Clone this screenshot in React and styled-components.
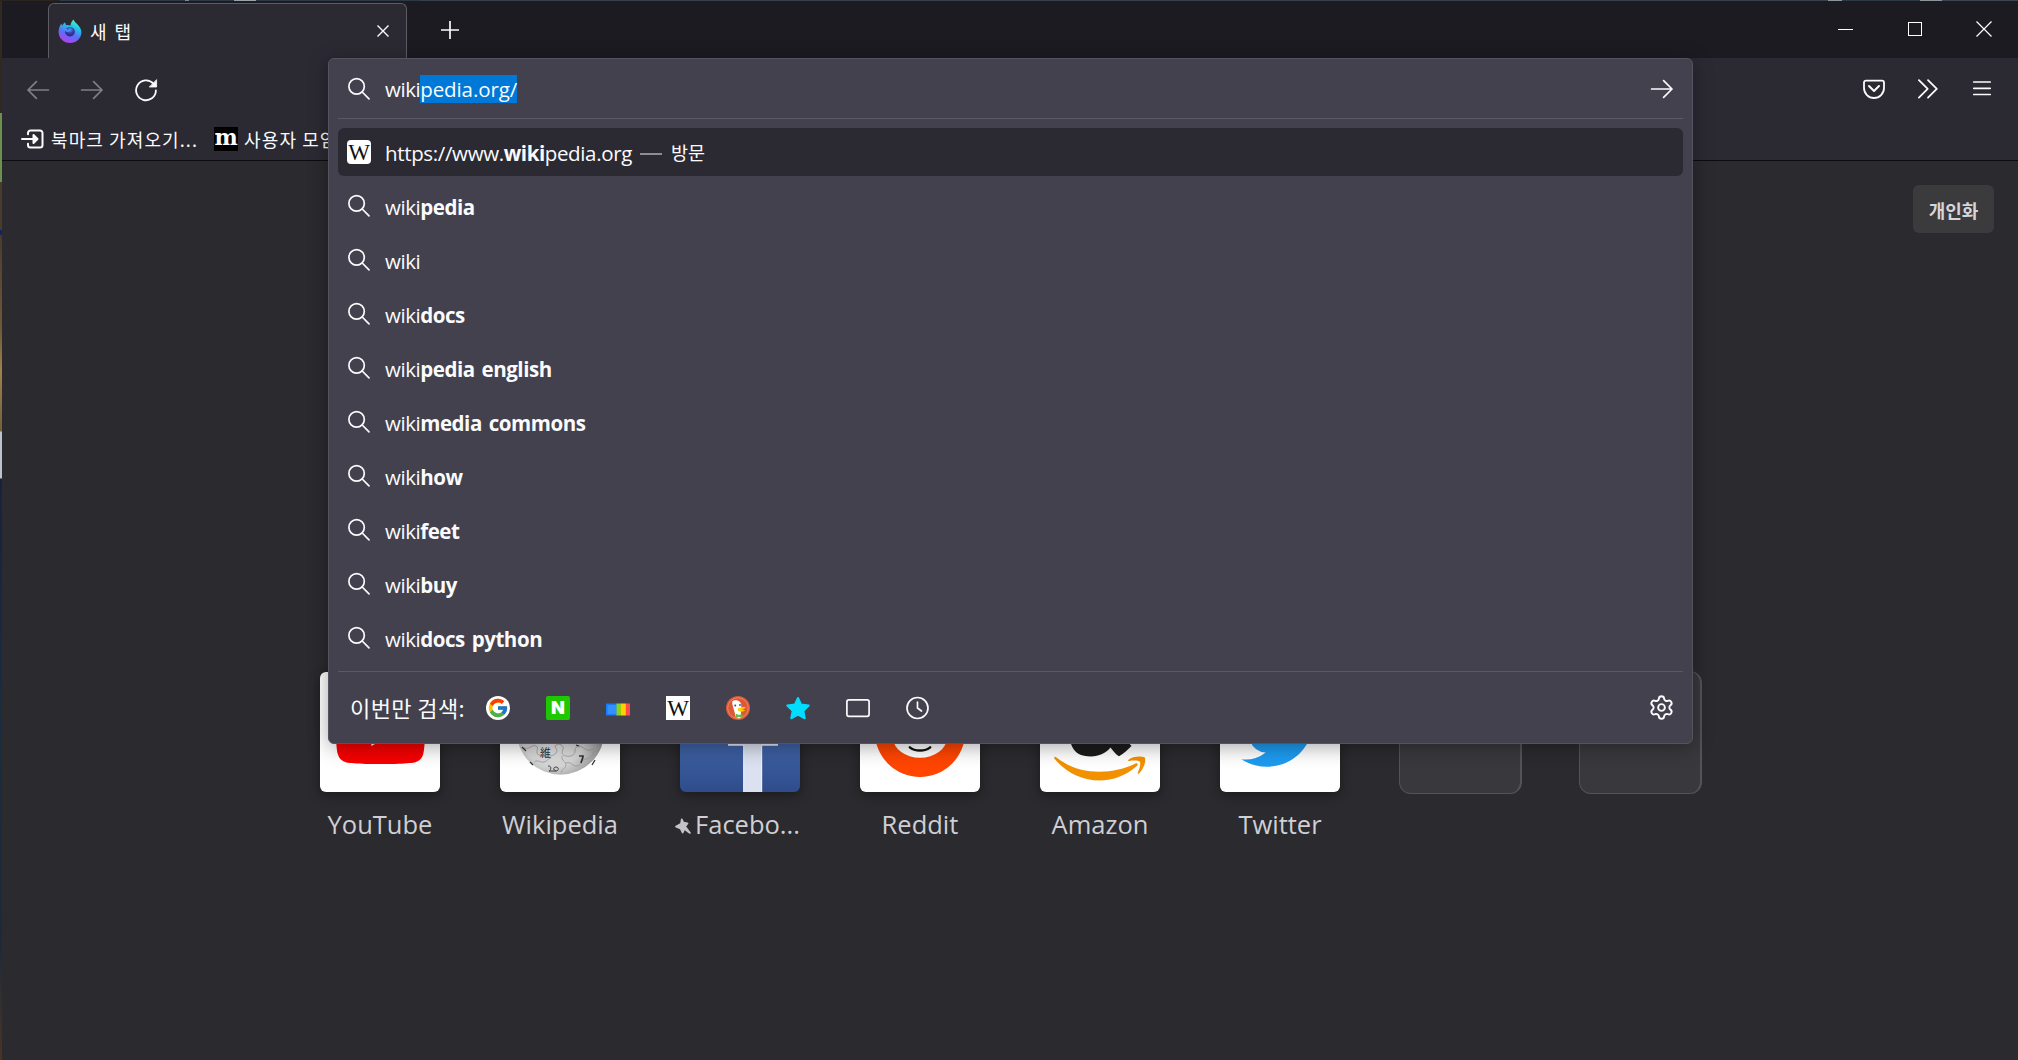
import styled, { createGlobalStyle } from 'styled-components';
import { Settings } from 'lucide-react';
import { FcGoogle } from 'react-icons/fc';

const latin = "'Open Sans', 'Noto Sans CJK KR', sans-serif";
const korean = "'Noto Sans CJK KR', 'Open Sans', sans-serif";

const GlobalStyle = createGlobalStyle`
	* {
		box-sizing: border-box;
	}
	body {
		margin: 0;
		background-color: #2b2a2e;
		font-family: ${latin};
		overflow: hidden;
	}
	svg {
		display: block;
		flex-shrink: 0;
	}
`;

//Desktop peeking out around the window
const Desktop = styled.div`
	display: flex;
	width: 2018px;
	height: 1060px;
	padding: 1px 0 0 2px;
	background:
		linear-gradient(
			90deg,
			#2a241e 0 60px,
			#2b3947 60px 185px,
			#7d8a94 185px 189px,
			#2b3947 189px 234px,
			#9aa2a8 234px 256px,
			#2b3947 256px 420px,
			#36414d 420px 1828px,
			#8b959c 1828px 1842px,
			#2d3945 1842px 1920px,
			#8b959c 1920px 1942px,
			#3a454f 1942px
		) 0 0 / 100% 1px no-repeat,
		linear-gradient(
			180deg,
			#32281f 0 113px,
			#6c914f 113px 182px,
			#4a3b2c 182px 230px,
			#10206a 230px 234px,
			#4a3b2c 236px,
			#6f5a3a 330px,
			#9c824c 370px,
			#75603c 431px,
			#b9c4cc 432px 478px,
			#16233a 479px,
			#1c2c40 700px,
			#1b2a3a 940px,
			#4a3424 1060px
		);
`;

const Window = styled.div`
	position: relative;
	display: flex;
	flex-direction: column;
	flex: 1;
	background-color: #2b2a2e;
`;

const TitleBar = styled.div`
	display: flex;
	height: 57px;
	padding-left: 46px;
	background-color: #1c1b22;
`;

const Tab = styled.div`
	display: flex;
	align-items: center;
	width: 359px;
	height: 55px;
	margin-top: 2px;
	padding: 0 16px 0 9px;
	background-color: #2b2a33;
	border: 1px solid #5d5c65;
	border-bottom: none;
	border-radius: 6px 6px 0 0;
	color: #fbfbfe;
`;

const TabTitle = styled.span`
	flex: 1;
	margin-left: 8px;
	font-family: ${korean};
	font-size: 18px;
	line-height: 26px;
	word-spacing: 4px;
`;

const NewTab = styled.div`
	display: flex;
	align-items: center;
	padding: 0 0 0 33px;
	height: 58px;
`;

const WindowButtons = styled.div`
	display: flex;
	margin-left: auto;
`;

const WindowButton = styled.div`
	display: flex;
	justify-content: center;
	align-items: center;
	width: 69px;
	height: 56px;
`;

const NavBar = styled.div`
	display: flex;
	justify-content: space-between;
	height: 63px;
	padding: 0 9px;
	background-color: #2b2a33;
`;

const NavGroup = styled.div`
	display: flex;
	align-items: center;
`;

const NavButton = styled.div`
	display: flex;
	justify-content: center;
	align-items: center;
	width: 54px;
	height: 54px;
	color: ${({ $disabled }) => ($disabled ? '#807f87' : '#fbfbfe')};
`;

const Bookmarks = styled.div`
	display: flex;
	height: 40px;
	padding: 0 0 3px 19px;
	background-color: #2b2a33;
	border-bottom: 1px solid #0c0c0d;
`;

const Bookmark = styled.div`
	display: flex;
	align-items: center;
	gap: 6px;
	margin-right: 16px;
	color: #fbfbfe;
	font-family: ${korean};
	font-size: 18px;
	line-height: 26px;
	letter-spacing: 1.1px;
	white-space: nowrap;
`;

const Page = styled.div`
	display: flex;
	flex-direction: column;
	flex: 1;
	padding: 24px 24px 0 0;
`;

const Personalize = styled.div`
	align-self: flex-end;
	width: 81px;
	height: 48px;
	border-radius: 6px;
	background-color: #3b3b3d;
	color: #d6d5da;
	font-family: ${korean};
	font-size: 18px;
	font-weight: 700;
	line-height: 50px;
	text-align: center;
`;

const TopSites = styled.div`
	display: flex;
	gap: 60px;
	margin: 439px 0 0 318px;
`;

const Site = styled.div`
	display: flex;
	flex-direction: column;
	align-items: center;
	width: 120px;
`;

const Tile = styled.div`
	width: 120px;
	height: 120px;
	border-radius: 6px;
	background: ${({ $bg }) => $bg || '#fff'};
	box-shadow: 0 3px 12px rgba(0, 0, 0, 0.4);
	overflow: hidden;
`;

const EmptyTile = styled.div`
	width: 123px;
	height: 123px;
	margin: -1px -2px 0 -1px;
	flex-shrink: 0;
	border: 1px solid #545358;
	border-right-width: 2px;
	border-radius: 12px;
	background-color: #39383c;
`;

const SiteName = styled.div`
	display: flex;
	align-items: center;
	margin: 14px 0 0 ${({ $pinned }) => ($pinned ? '-5px' : '0')};
	gap: 4px;
	color: #cfcfd4;
	font-size: 25.5px;
	line-height: 36px;
	white-space: nowrap;
	svg {
		margin-top: 3px;
	}
`;

//Address bar with its open suggestion list
const UrlPanel = styled.div`
	position: absolute;
	top: 57px;
	left: 326px;
	width: 1365px;
	height: 686px;
	padding: 0 9px;
	border: 1px solid #54535f;
	border-radius: 6px;
	background-color: #42414d;
	box-shadow: 0 3px 20px rgba(0, 0, 0, 0.35);
	color: #fbfbfe;
	font-size: 20.5px;
	letter-spacing: -0.1px;
`;

const UrlInput = styled.div`
	display: flex;
	align-items: center;
	height: 60px;
	padding: 0 9px;
	border-bottom: 1px solid #5a5964;
`;

const UrlText = styled.div`
	flex: 1;
	margin-left: 14px;
	line-height: 28px;
`;

const Typed = styled.span`
	letter-spacing: -0.45px;
`;

const Selection = styled.span`
	display: inline-block;
	height: 28px;
	background-color: #0078d7;
`;

const Results = styled.div`
	display: flex;
	flex-direction: column;
	gap: 6px;
	padding: 9px 0;
	border-bottom: 1px solid #5a5964;
`;

const Result = styled.div`
	display: flex;
	align-items: center;
	height: 48px;
	padding: 0 9px;
	border-radius: 6px;
	background-color: ${({ $selected }) => ($selected ? '#2b2a33' : 'transparent')};
`;

const ResultText = styled.span`
	margin: 2px 0 0 14px;
	line-height: 28px;
	letter-spacing: -0.35px;
	white-space: nowrap;
	b {
		font-weight: 700;
		letter-spacing: -0.45px;
		word-spacing: 2px;
	}
`;

const Dash = styled.span`
	width: 22px;
	height: 1.5px;
	margin: 4px 9px 0 8px;
	background-color: #8d8c95;
`;

const Action = styled.span`
	font-family: ${korean};
	font-size: 18.5px;
	line-height: 28px;
	letter-spacing: 0;
`;

const OneOffs = styled.div`
	display: flex;
	align-items: center;
	height: 71px;
	padding: 0 8px 0 12px;
`;

const OneOffLabel = styled.span`
	width: 136px;
	margin-top: -1px;
	font-family: ${korean};
	font-size: 22px;
	line-height: 30px;
	letter-spacing: 0.4px;
	white-space: nowrap;
`;

const Engines = styled.div`
	display: flex;
	flex: 1;
	gap: 36px;
`;

const GoogleBadge = styled.div`
	display: flex;
	justify-content: center;
	align-items: center;
	width: 24px;
	height: 24px;
	border-radius: 50%;
	background-color: #fff;
`;

const LetterBadge = styled.div`
	width: 24px;
	height: 24px;
	border-radius: ${({ $radius }) => $radius || 0}px;
	background-color: ${({ $bg }) => $bg};
	color: ${({ $color }) => $color};
	font-family: ${({ $font }) => $font};
	font-size: ${({ $size }) => $size}px;
	font-weight: ${({ $weight }) => $weight || 400};
	line-height: ${({ $line }) => $line || 24}px;
	letter-spacing: 0;
	display: flex;
	justify-content: center;
	flex-shrink: 0;
`;

const WikiBadge = ({ radius }) => (
	<LetterBadge $bg="#fff" $color="#111" $radius={radius} $font="'Liberation Serif', serif" $size={23} $line={25}>
		W
	</LetterBadge>
);

const SearchIcon = () => (
	<svg width="24" height="24" viewBox="0 0 24 24" fill="none" stroke="#fbfbfe" strokeWidth="1.7" strokeLinecap="round">
		<circle cx="9.6" cy="9.4" r="7.7" />
		<path d="M15.2 15L22 21.8" />
	</svg>
);

const ArrowIcon = ({ flip }) => (
	<svg width="24" height="24" viewBox="0 0 24 24" fill="none" stroke="currentColor" strokeWidth="1.7" strokeLinecap="round" strokeLinejoin="round">
		<path d={flip ? 'M22.4 12H2M10.4 3.6L2 12l8.4 8.4' : 'M1.6 12H22M13.6 3.6L22 12l-8.4 8.4'} />
	</svg>
);

const ReloadIcon = () => (
	<svg width="24" height="24" viewBox="0 0 24 24" fill="none" stroke="currentColor" strokeWidth="1.8" strokeLinecap="round">
		<path d="M21.9 12.4A9.9 9.9 0 1 1 19.4 5.700" />
		<path d="M22.6 2v7h-7z" fill="currentColor" strokeWidth=".8" strokeLinejoin="round" />
	</svg>
);

const FirefoxIcon = () => (
	<svg width="24" height="24" viewBox="0 0 24 24">
		<defs>
			<linearGradient id="fx" x1=".75" y1="0" x2=".35" y2="1">
				<stop offset="0" stopColor="#5dfca8" />
				<stop offset=".32" stopColor="#1fc5ee" />
				<stop offset=".62" stopColor="#5a72f5" />
				<stop offset="1" stopColor="#b33df5" />
			</linearGradient>
			<radialGradient id="fxCore" cx=".5" cy=".3" r=".7">
				<stop offset="0" stopColor="#3fa7e6" />
				<stop offset=".5" stopColor="#3a3fae" />
				<stop offset="1" stopColor="#321c7e" />
			</radialGradient>
		</defs>
		<path d="M15.6.4c.4 2 2 3 3.5 4.5 2.9 2.9 4.3 5.5 4.3 8.3C23.4 19.3 18.3 24 12 24S.6 19.1.6 13c0-3.300 1.200-6.300 2.800-8.400.1 1 .4 1.600.8 2.200C4.800 5.200 5.800 4 7.200 3.200c0 1.300.5 2.300 1.300 3 1.500-.2 2.900 0 3.900.5.3-2.500 1.400-4.700 3.200-6.300z" fill="url(#fx)" />
		<path d="M8.2 9.6c2.500-2.800 8-1.900 8.600 2.200.5 3.500-2.300 5.700-5 5.600-3.200-.1-5.100-2.700-4.700-5.300.9 1 2.300 1.300 3.800.6.8-.4 1.600-1 2.200-1.700-2 .5-3.600 0-4.900-1.400z" fill="url(#fxCore)" />
	</svg>
);

const ImportIcon = () => (
	<svg width="24" height="24" viewBox="0 0 24 24" fill="none" stroke="currentColor" strokeWidth="2" strokeLinecap="round" strokeLinejoin="round">
		<path d="M7 7.200V6a2.500 2.500 0 0 1 2.500-2.500h9.500A2.500 2.500 0 0 1 21.500 6v12a2.500 2.500 0 0 1-2.500 2.500H9.500A2.500 2.500 0 0 1 7 18v-1.200M1 12h12" />
		<path d="M12.500 8l4 4-4 4z" fill="currentColor" />
	</svg>
);

const PocketIcon = () => (
	<svg width="24" height="24" viewBox="0 0 24 24" fill="none" stroke="currentColor" strokeWidth="1.8" strokeLinecap="round" strokeLinejoin="round">
		<path d="M4 2.600h16a2 2 0 0 1 2 2V10a10 10 0 0 1-20 0V4.600a2 2 0 0 1 2-2z" />
		<path d="M7 8l5 5 5-5" strokeWidth="2" />
	</svg>
);

const DuckIcon = () => (
	<svg width="24" height="24" viewBox="0 0 24 24">
		<circle cx="12" cy="12" r="12" fill="#de5833" />
		<circle cx="12" cy="12" r="10.3" fill="none" stroke="#f0a48e" strokeWidth=".6" />
		<path d="M6.300 5.500C7.500 3.800 12 3.500 14 6c1.500 2 1.400 4 1.200 6.500L14.600 22c-2 .4-3.600.2-4.700-.4C9 17 7.200 12 6.700 9.500c-.3-1.600-.6-2.600-.4-4z" fill="#fff" />
		<circle cx="9.2" cy="9.5" r="1" fill="#2d4f8e" />
		<circle cx="14" cy="9" r=".9" fill="#2d4f8e" />
		<path d="M12.200 12.200c2-.9 5.500-1.500 7.300-1 .3 1-2.500 1.800-4 2.200 1.700.4 3.200.2 3.400.9-.8 1.500-5.200 1.800-6.500.6-.6-.7-.8-2-.2-2.700z" fill="#fdd20a" />
		<path d="M10 17.800l3 1.200 3.500-1.200v4L13 20.900l-3 1z" fill="#65bc46" />
	</svg>
);

const StarIcon = () => (
	<svg width="24" height="24" viewBox="0 0 24 24" fill="#00ddff" stroke="#00ddff" strokeWidth="2" strokeLinejoin="round">
		<path d="M12 2l3.100 6.600 7.600.9-5.400 5.200 1.400 7.600L12 18.600l-6.700 3.700 1.400-7.600L1.300 9.500l7.600-.9z" />
	</svg>
);

const ColorsIcon = () => (
	<svg width="24" height="24" viewBox="0 0 24 24">
		<rect y="7.5" width="11" height="12" fill="#167bfb" />
		<rect x="1.5" y="9" width="9" height="9" fill="#3390ff" />
		<rect x="10.5" y="7.5" width="4.7" height="12" fill="#8fd11a" />
		<rect x="15" y="7.5" width="5" height="12" fill="#ffd000" />
		<rect x="19.8" y="7.5" width="4.2" height="12" fill="#ff4b4b" />
	</svg>
);

const TabsIcon = () => (
	<svg width="24" height="24" viewBox="0 0 24 24" fill="none" stroke="#fbfbfe" strokeWidth="1.7">
		<rect x=".9" y="3.9" width="22.2" height="16.4" rx="2" />
	</svg>
);

const ClockIcon = () => (
	<svg width="24" height="24" viewBox="0 0 24 24" fill="none" stroke="#fbfbfe" strokeWidth="1.7" strokeLinecap="round" strokeLinejoin="round">
		<circle cx="11.5" cy="12" r="10.5" />
		<path d="M11.500 6v6l4 3" />
	</svg>
);

const PinIcon = () => (
	<svg width="16" height="16" viewBox="0 0 16 16" fill="#c3c3c8">
		<path d="M6 .8c.5-.6 1.300-.5 1.600.2l1.200 2.800 3.700.7c1 .3 1.200 1 .6 1.600l-1.900 2.500 4.500 5.900c.5.9-.4 1.700-1.300 1.200l-4.600-3.500-1.300 2.600c-.4.800-1.200.8-1.600.1L5 11.300.8 9.400C0 9-.1 8.200.7 7.800l4.500-2.600z" />
	</svg>
);

const YouTubeArt = () => (
	<svg width="120" height="120" viewBox="0 0 120 120">
		<path transform="translate(16 16.2) scale(3.71)" fill="#f60002" d="M23.498 6.186a3.016 3.016 0 0 0-2.122-2.136C19.505 3.545 12 3.545 12 3.545s-7.505 0-9.377.505A3.017 3.017 0 0 0 .502 6.186C0 8.070 0 12 0 12s0 3.930.502 5.814a3.016 3.016 0 0 0 2.122 2.136c1.871.505 9.376.505 9.376.505s7.505 0 9.377-.505a3.015 3.015 0 0 0 2.122-2.136C24 15.930 24 12 24 12s0-3.930-.502-5.814zM9.545 15.568V8.432L15.818 12l-6.273 3.568z" />
	</svg>
);

const WikipediaArt = () => (
	<svg width="120" height="120" viewBox="0 0 120 120">
		<defs>
			<radialGradient id="globe" cx=".42" cy=".55" r=".6">
				<stop offset="0" stopColor="#efefef" />
				<stop offset=".6" stopColor="#d4d4d4" />
				<stop offset="1" stopColor="#8b8b8b" />
			</radialGradient>
		</defs>
		<circle cx="60.5" cy="58.7" r="44" fill="url(#globe)" />
		<g fill="none" stroke="#9a9a9a" strokeWidth=".8">
			<path d="M24 76c6 2 8-4 12-2s-2 7 3 9 14 2 17-2-3-6 0-8 8 0 7 4-2 6 3 7 9-1 9-5 3-6 7-4 5 5 12 2" />
			<path d="M34 90c4-3 6 1 10 0s4-4 7-4M62 84c-1 5 4 5 4 9s-5 4-5 8M66 91c6-2 6 4 11 3s4-6 9-7 6-3 8-8" />
		</g>
		<g fill="none" stroke="#333" strokeWidth="1.3">
			<path d="M79 84h4c0 3-1.500 4-2 7" strokeWidth="1.7" />
			<path d="M48 94c5 0 2 5 1 5h7c3 0 3-4 0-4s-3 3 0 4" strokeWidth=".9" />
			<path d="M22 75l4 4M76 73l3 1M95 88l-3 5M30 90l3 3" />
		</g>
		<text x="40" y="84.5" fontSize="11" fill="#333" fontFamily="'Noto Sans CJK JP', sans-serif">維</text>
	</svg>
);

const FacebookArt = () => (
	<svg width="120" height="120" viewBox="0 0 120 120">
		<path d="M48 56h50v17.500H82V120H63.500V73.500H48z" fill="#dbe1f0" />
		<path d="M48 73h15.700V120M98 73H81.700V120" fill="none" stroke="#f3f5fa" strokeWidth="1" />
	</svg>
);

const RedditArt = () => (
	<svg width="120" height="120" viewBox="0 0 120 120">
		<circle cx="60" cy="59.8" r="45.2" fill="#ff4500" />
		<ellipse cx="60" cy="65.5" rx="27" ry="20.2" fill="#fff" />
		<path d="M49.800 75.300c5 4.200 15.400 4.200 20.400 0" fill="none" stroke="#111" strokeWidth="2.4" strokeLinecap="round" />
	</svg>
);

const AmazonArt = () => (
	<svg width="120" height="120" viewBox="0 0 120 120">
		<path d="M31 56v16c3 9 10 12.500 20 12.500 8 0 15-3.500 19.500-9 2.500 3.500 5.500 7 8.500 8.800 4-2.500 9-6.500 12.500-10.300L88 70V56z" fill="#1b1b1b" />
		<path d="M15.500 84.800c14 11 28 14.900 44 14.900 13 0 25-2.800 36-8.200 1.800-.9 3 .9 1.600 2.200C86 103.500 73 108.500 59.500 108.500c-17 0-33-7.500-44.800-21.500-.9-1.300-.4-2.800.8-2.200z" fill="#f29100" />
		<path d="M88.500 87.700c4-3.200 12-4 16.300-2.200 1.500 3.500-1 11.500-5.800 16-.9.8-1.600.3-1.200-.7 1.200-3.200 3.200-8.700 2.200-10.800-1.400-2-7.400-1.500-10.700-1.100-1.300.2-1.600-.6-.8-1.200z" fill="#f29100" />
	</svg>
);

const TwitterArt = () => (
	<svg width="120" height="120" viewBox="0 0 120 120">
		<path transform="translate(21.3 21.6) scale(3.36)" fill="#1d9bf0" d="M23.953 4.570a10 10 0 01-2.825.775 4.958 4.958 0 002.163-2.723c-.951.555-2.005.959-3.127 1.184a4.920 4.920 0 00-8.384 4.482C7.690 8.095 4.067 6.130 1.640 3.162a4.822 4.822 0 00-.666 2.475c0 1.710.87 3.213 2.188 4.096a4.904 4.904 0 01-2.228-.616v.06a4.923 4.923 0 003.946 4.827 4.996 4.996 0 01-2.212.085 4.936 4.936 0 004.604 3.417 9.867 9.867 0 01-6.102 2.105c-.39 0-.779-.023-1.170-.067a13.995 13.995 0 007.557 2.209c9.053 0 13.998-7.496 13.998-13.985 0-.21 0-.42-.015-.63A9.935 9.935 0 0024 4.590z" />
	</svg>
);

const sites = [
	{ name: 'YouTube', Art: YouTubeArt },
	{ name: 'Wikipedia', Art: WikipediaArt },
	{ name: 'Facebo...', Art: FacebookArt, pinned: true, bg: 'linear-gradient(#4a70bd, #3f62a5 60%, #2f4c8a)' },
	{ name: 'Reddit', Art: RedditArt },
	{ name: 'Amazon', Art: AmazonArt },
	{ name: 'Twitter', Art: TwitterArt },
];

const suggestions = ['pedia', '', 'docs', 'pedia english', 'media commons', 'how', 'feet', 'buy', 'docs python'];

const App = () => {
	return (
		<Desktop>
			<GlobalStyle />
			<Window>
				<TitleBar>
					<Tab>
						<FirefoxIcon />
						<TabTitle>새 탭</TabTitle>
						<svg width="14" height="14" viewBox="0 0 14 14" fill="none" stroke="#fbfbfe" strokeWidth="1.4">
							<path d="M1.500 1.500l11 11M12.500 1.500l-11 11" />
						</svg>
					</Tab>
					<NewTab>
						<svg width="20" height="20" viewBox="0 0 20 20" stroke="#fbfbfe" strokeWidth="1.7">
							<path d="M10 1v18M1 10h18" />
						</svg>
					</NewTab>
					<WindowButtons>
						<WindowButton>
							<svg width="15" height="15" viewBox="0 0 15 15" stroke="#fff">
								<path d="M0 7.500h15" />
							</svg>
						</WindowButton>
						<WindowButton>
							<svg width="14" height="14" viewBox="0 0 14 14" fill="none" stroke="#fff">
								<rect x=".5" y=".5" width="13" height="13" />
							</svg>
						</WindowButton>
						<WindowButton>
							<svg width="16" height="16" viewBox="0 0 16 16" stroke="#fff" strokeWidth="1.2">
								<path d="M.5.5l15 15M15.500.5l-15 15" />
							</svg>
						</WindowButton>
					</WindowButtons>
				</TitleBar>
				<NavBar>
					<NavGroup>
						<NavButton $disabled>
							<ArrowIcon flip />
						</NavButton>
						<NavButton $disabled>
							<ArrowIcon />
						</NavButton>
						<NavButton>
							<ReloadIcon />
						</NavButton>
					</NavGroup>
					<NavGroup>
						<NavButton>
							<PocketIcon />
						</NavButton>
						<NavButton>
							<svg width="24" height="24" viewBox="0 0 24 24" fill="none" stroke="currentColor" strokeWidth="1.8" strokeLinecap="round" strokeLinejoin="round">
								<path d="M2.900 2.200l8.800 8.700-8.800 8.700M12 2.200l8.800 8.700-8.800 8.700" />
							</svg>
						</NavButton>
						<NavButton>
							<svg width="24" height="24" viewBox="0 0 24 24" stroke="currentColor" strokeWidth="1.7" strokeLinecap="round">
								<path d="M3.800 4h16.400M3.800 10.300h16.400M3.800 16.500h16.400" />
							</svg>
						</NavButton>
					</NavGroup>
				</NavBar>
				<Bookmarks>
					<Bookmark>
						<ImportIcon />
						북마크 가져오기...
					</Bookmark>
					<Bookmark>
						<LetterBadge $bg="#000" $color="#fff" $font="'DejaVu Serif', serif" $size={22} $weight={700} $line={20}>
							m
						</LetterBadge>
						사용자 모임
					</Bookmark>
				</Bookmarks>
				<Page>
					<Personalize>개인화</Personalize>
					<TopSites>
						{sites.map(({ name, Art, pinned, bg }) => (
							<Site key={name}>
								<Tile $bg={bg}>
									<Art />
								</Tile>
								<SiteName $pinned={pinned}>
									{pinned && <PinIcon />}
									{name}
								</SiteName>
							</Site>
						))}
						<EmptyTile />
						<EmptyTile />
					</TopSites>
				</Page>
				<UrlPanel>
					<UrlInput>
						<SearchIcon />
						<UrlText>
							<Typed>wiki</Typed>
							<Selection>pedia.org/</Selection>
						</UrlText>
						<ArrowIcon />
					</UrlInput>
					<Results>
						<Result $selected>
							<WikiBadge radius={4} />
							<ResultText>
								https://www.<b>wiki</b>pedia.org
							</ResultText>
							<Dash />
							<Action>방문</Action>
						</Result>
						{suggestions.map((rest) => (
							<Result key={rest}>
								<SearchIcon />
								<ResultText>
									<Typed>wiki</Typed>
									<b>{rest}</b>
								</ResultText>
							</Result>
						))}
					</Results>
					<OneOffs>
						<OneOffLabel>이번만 검색:</OneOffLabel>
						<Engines>
							<GoogleBadge>
								<FcGoogle size={22} />
							</GoogleBadge>
							<LetterBadge $bg="#1ec800" $color="#fff" $radius={2} $font="Inter, sans-serif" $size={18} $weight={900}>
								N
							</LetterBadge>
							<ColorsIcon />
							<WikiBadge />
							<DuckIcon />
							<StarIcon />
							<TabsIcon />
							<ClockIcon />
						</Engines>
						<Settings size={27} strokeWidth={1.7} />
					</OneOffs>
				</UrlPanel>
			</Window>
		</Desktop>
	);
};

export default App;
